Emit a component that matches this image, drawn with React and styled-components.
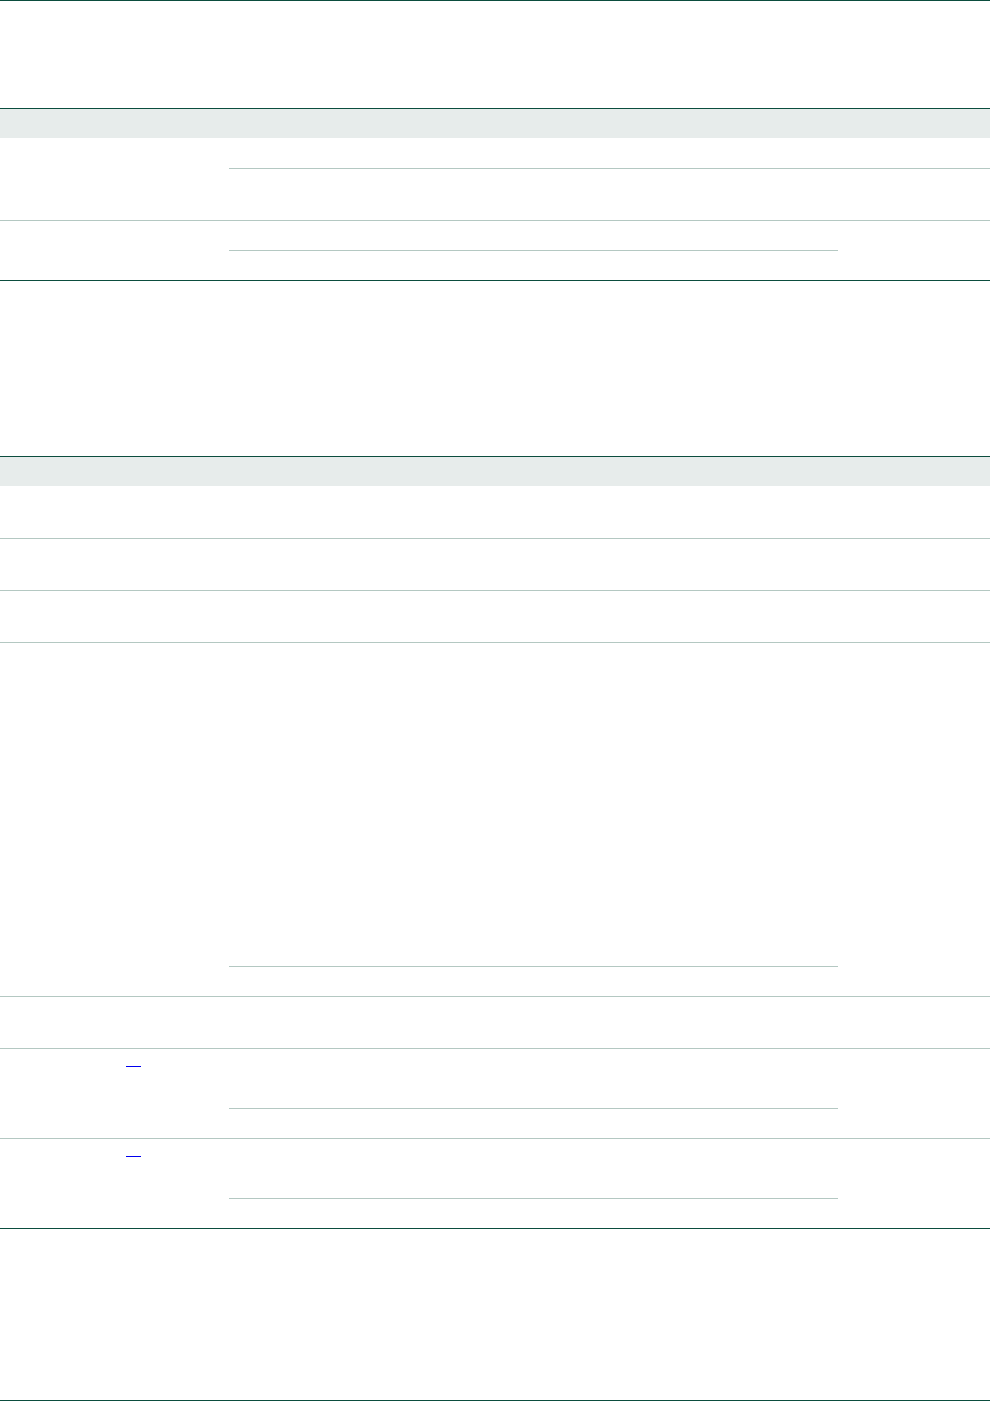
import React from "react";
import styled, { createGlobalStyle } from "styled-components";

const DARK = "#0b4d3e";
const LIGHT = "#b4c8c2";
const BAND = "#e7eceb";

const tableOne = [
  { cells: [30, 51] },
  { split: [29, 29] },
];

const tableTwo = [
  { cells: [52] },
  { cells: [51] },
  { cells: [51] },
  { split: [323, 29] },
  { cells: [51] },
  { note: true, split: [59, 29] },
  { note: true, split: [59, 29] },
];

const Group = ({ row }) => (
  <GroupRow>
    <Label>{row.note && <NoteLink href="#note">&nbsp;</NoteLink>}</Label>
    {row.split ? (
      <Split>
        <MainCol>
          {row.split.map((h, i) => (
            <Cell key={i} $h={h} />
          ))}
        </MainCol>
        <SideCol />
      </Split>
    ) : (
      <Body>
        {row.cells.map((h, i) => (
          <Cell key={i} $h={h} />
        ))}
      </Body>
    )}
  </GroupRow>
);

const DataTable = ({ rows }) => (
  <Table>
    <Head />
    {rows.map((row, i) => (
      <Group key={i} row={row} />
    ))}
  </Table>
);

const App = () => {
  return (
    <Page>
      <GlobalStyle />
      <Section $h={107} $rule />
      <DataTable rows={tableOne} />
      <Section $h={175} />
      <DataTable rows={tableTwo} />
      <Section $h={171} />
      <Section $h={40} $rule />
    </Page>
  );
};

export default App;

// STYLES
const GlobalStyle = createGlobalStyle`
  body {
    margin: 0;
    background: #ffffff;
  }
`;

const Page = styled.div`
  width: 990px;
  font-family: "Liberation Sans", Arial, sans-serif;
  font-size: 14px;
  color: #1c2b27;
`;

const Section = styled.div`
  height: ${(p) => p.$h}px;
  border-top: ${(p) => (p.$rule ? `1px solid ${DARK}` : "none")};
`;

const Table = styled.div`
  border-top: 1px solid ${DARK};
  border-bottom: 1px solid ${DARK};
`;

const Head = styled.div`
  height: 29px;
  background: ${BAND};
`;

const GroupRow = styled.div`
  display: flex;
  & + & {
    border-top: 1px solid ${LIGHT};
  }
`;

const Label = styled.div`
  width: 229px;
  flex: none;
`;

const Body = styled.div`
  flex: 1;
  display: flex;
  flex-direction: column;
`;

const Split = styled.div`
  flex: 1;
  display: flex;
`;

const MainCol = styled.div`
  width: 609px;
  flex: none;
  display: flex;
  flex-direction: column;
`;

const SideCol = styled.div`
  flex: 1;
`;

const Cell = styled.div`
  height: ${(p) => p.$h}px;
  & + & {
    border-top: 1px solid ${LIGHT};
  }
`;

const NoteLink = styled.a`
  display: inline-block;
  width: 15px;
  height: 17px;
  margin-left: 126px;
  border-bottom: 1px solid #0000ee;
  text-decoration: none;
  vertical-align: top;
`;
